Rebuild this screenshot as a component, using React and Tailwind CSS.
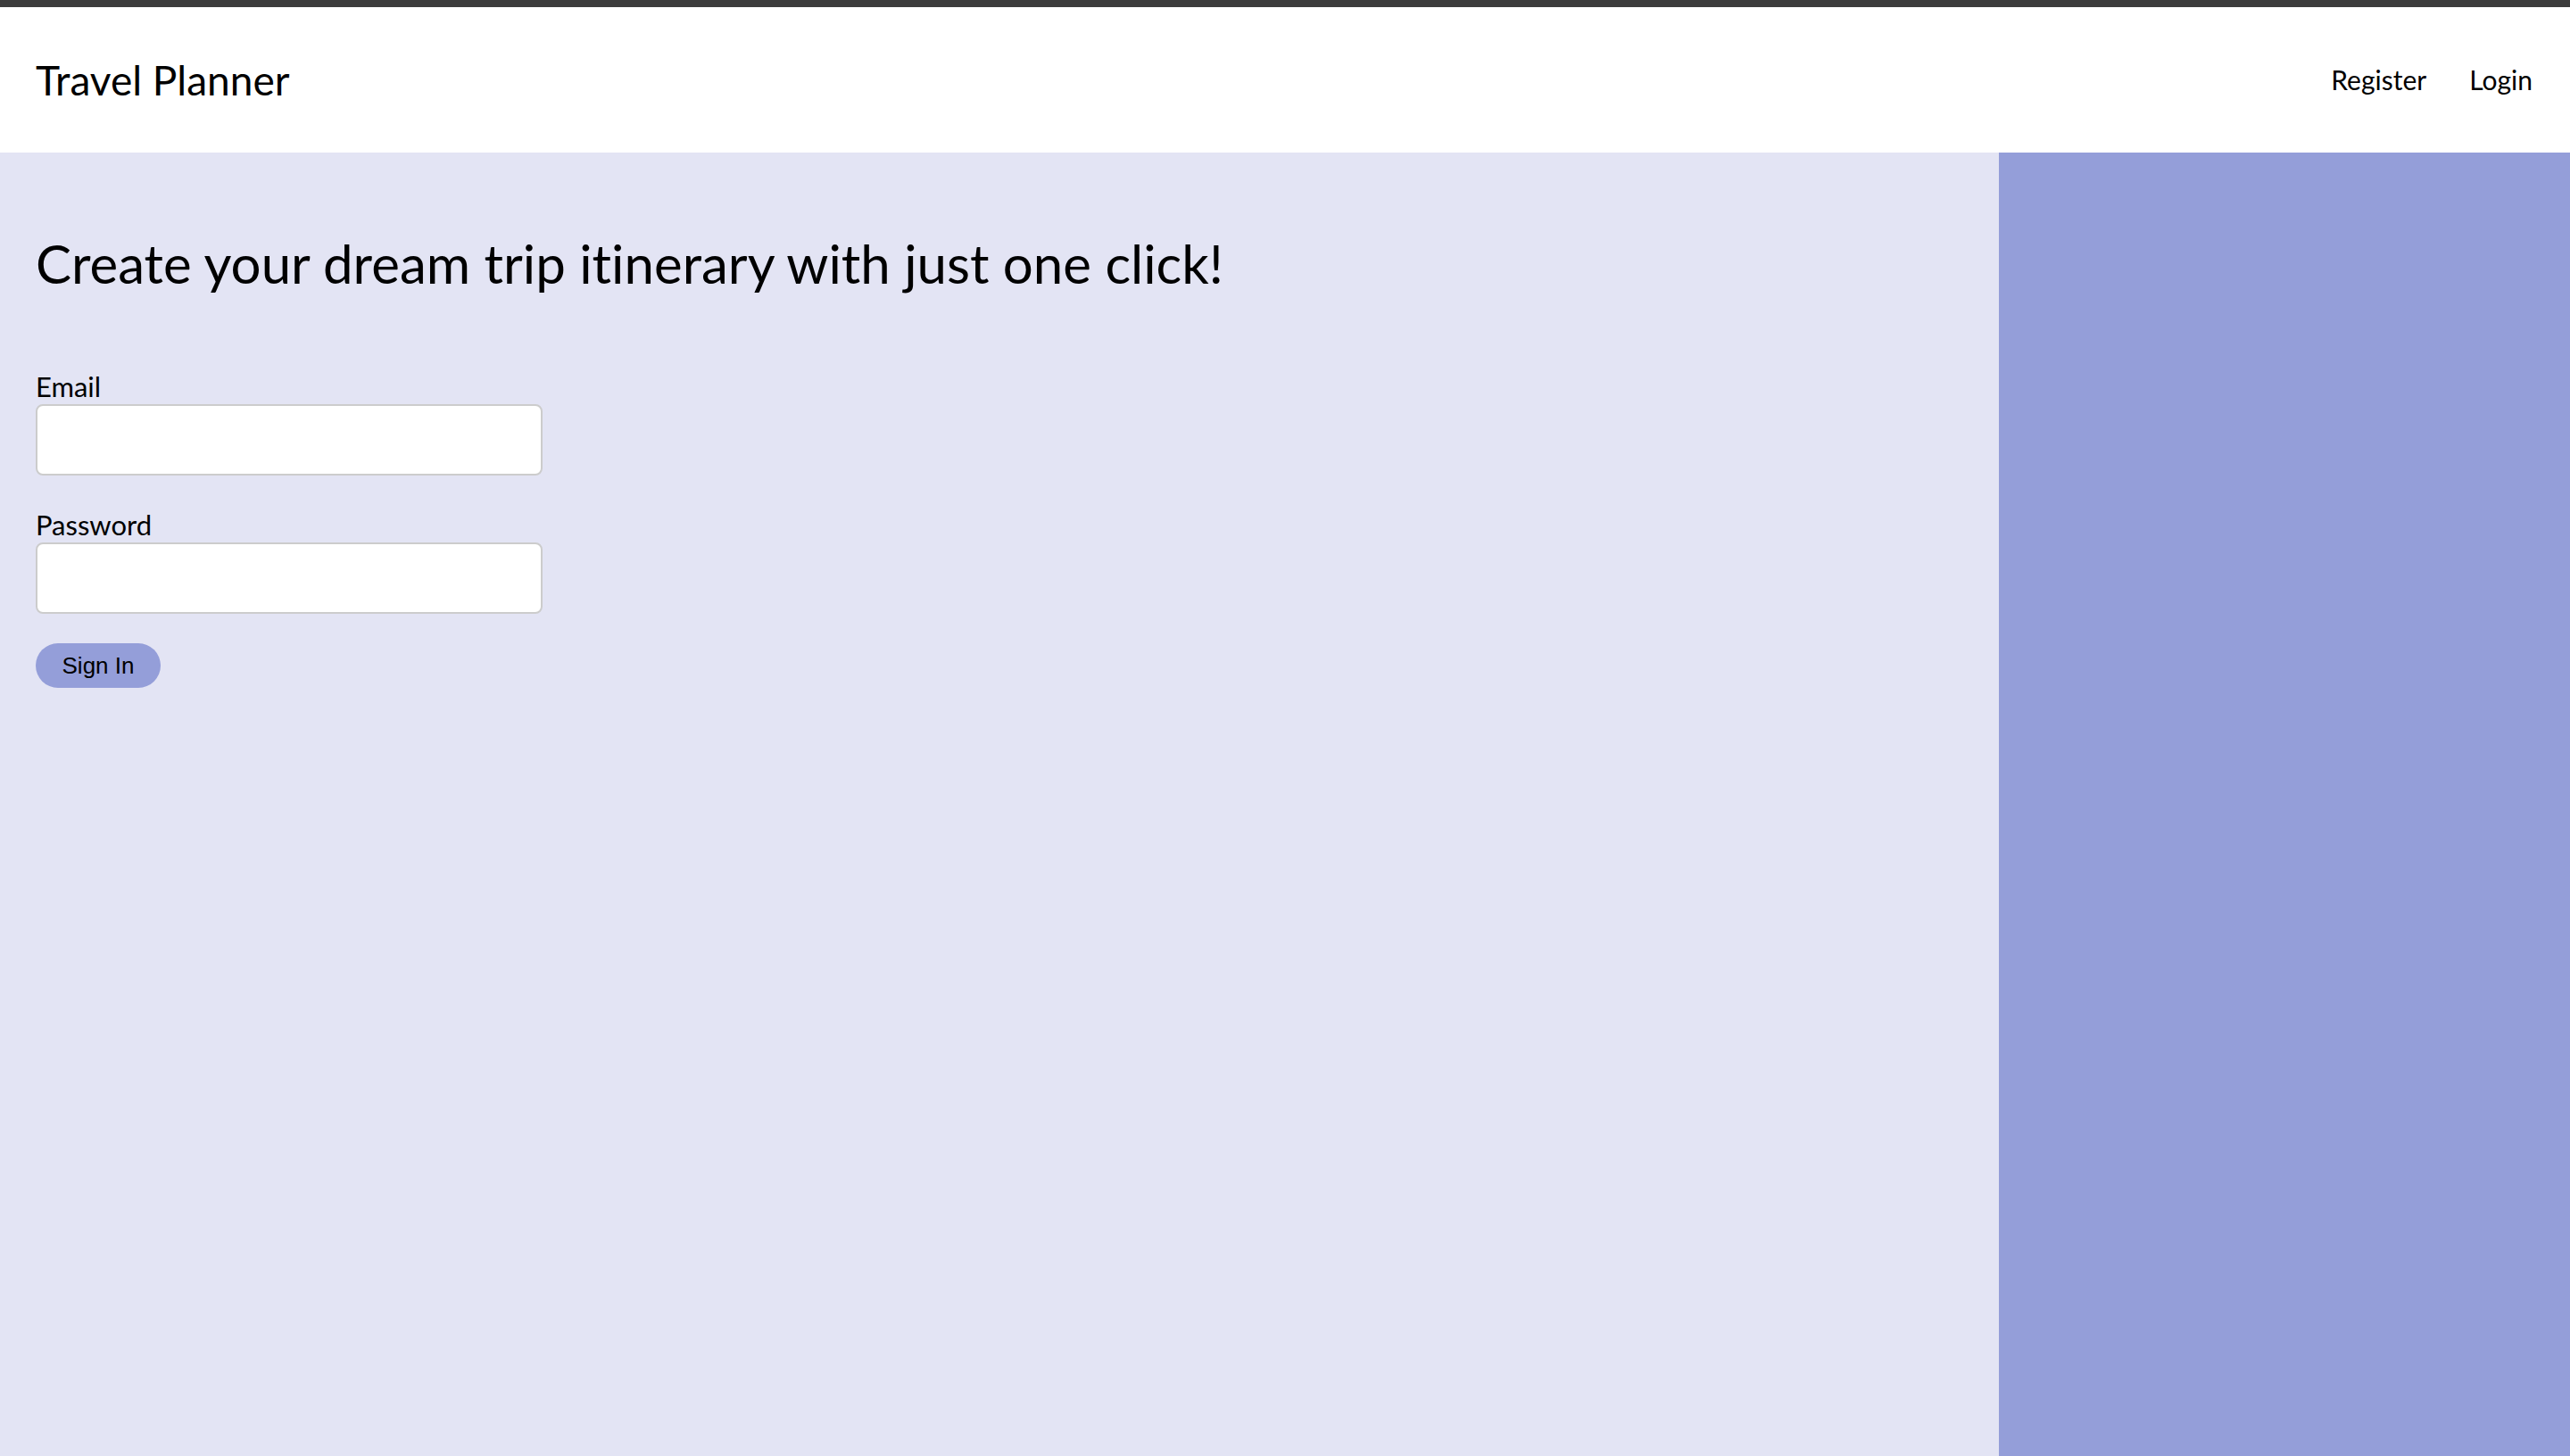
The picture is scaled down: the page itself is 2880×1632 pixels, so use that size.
export default function App() {
  return (
    <div className="min-h-screen flex flex-col font-['Lato',sans-serif] text-black [font-variant-ligatures:none]">
      <header className="border-t-8 border-[#3c3c3c] bg-white h-[171px] px-[40px] flex items-center justify-between">
        <h1 className="text-[46px] leading-none">Travel Planner</h1>
        <nav className="flex items-center gap-[48px] text-[30px]">
          <a href="#">Register</a>
          <a href="#" className="pr-[2px]">Login</a>
        </nav>
      </header>

      <main className="flex-1 flex">
        <section className="flex-1 bg-[#e3e4f4] px-[40px] pt-[94px]">
          <h2 className="text-[60px] leading-none mb-[88px]">
            Create your dream trip itinerary with just one click!
          </h2>
          <form className="flex flex-col w-[568px]">
            <label className="text-[31px] leading-[40px]">Email</label>
            <input
              type="email"
              className="h-[80px] bg-white border-2 border-[#cccccc] rounded-[8px] px-3 outline-none"
            />
            <label className="text-[31px] leading-[40px] mt-[35px]">Password</label>
            <input
              type="password"
              className="h-[80px] bg-white border-2 border-[#cccccc] rounded-[8px] px-3 outline-none"
            />
            <button
              type="button"
              className="mt-[33px] self-start w-[140px] h-[50px] rounded-full bg-[#949ed9] font-['Liberation_Sans',sans-serif] text-[26px]"
            >
              Sign In
            </button>
          </form>
        </section>
        <aside className="w-[640px] bg-[#949ed9]" />
      </main>
    </div>
  );
}
